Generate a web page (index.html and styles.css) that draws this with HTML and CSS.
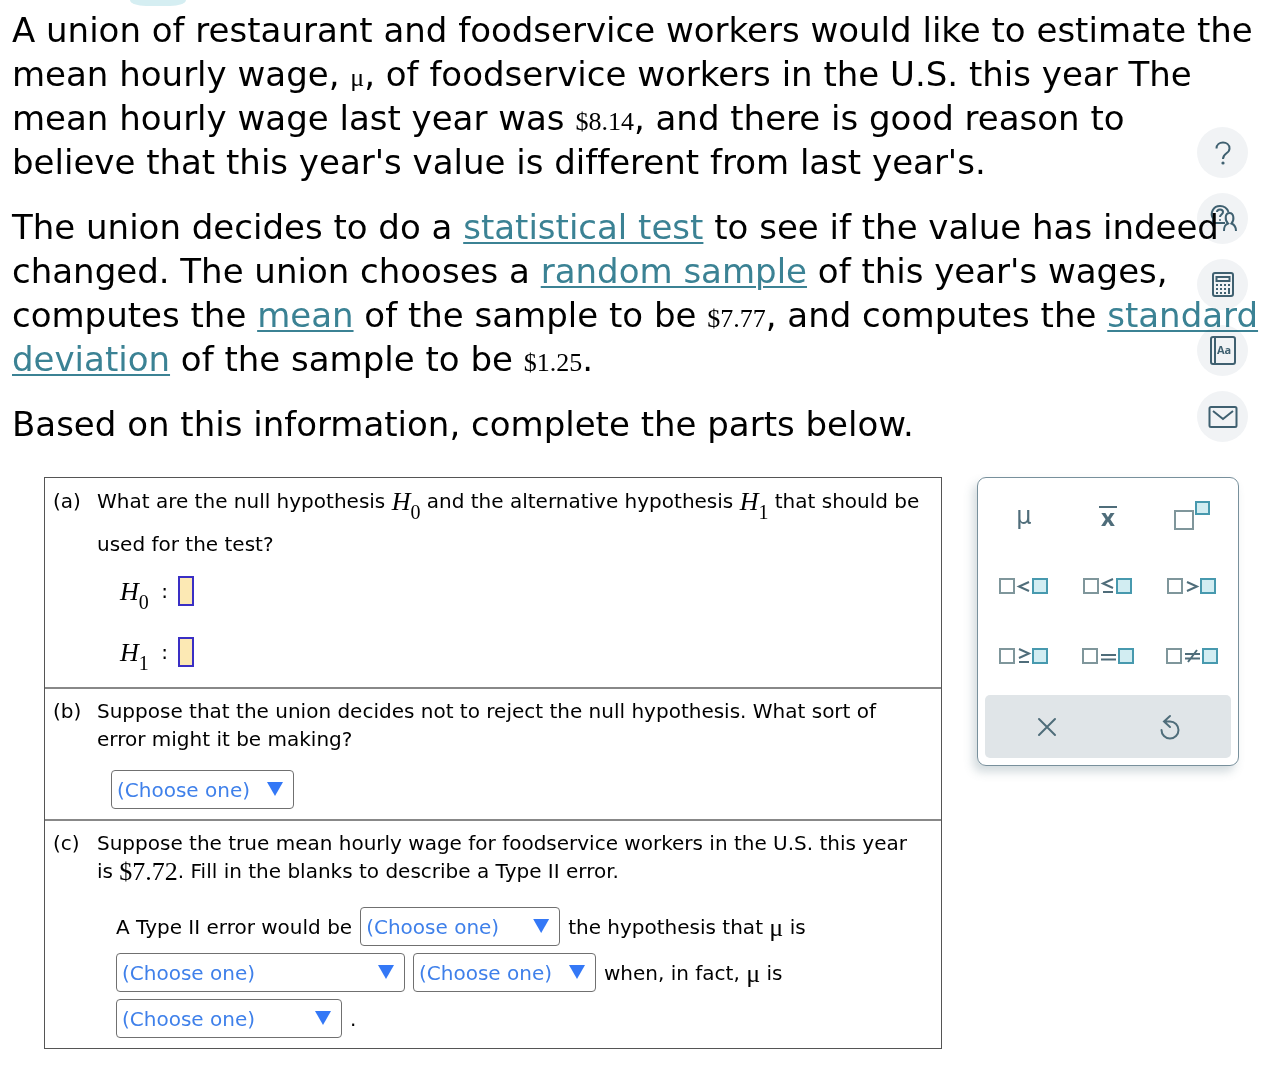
FILE: index.html
```html
<!DOCTYPE html>
<html lang="en">
<head>
    <meta charset="UTF-8">
    <meta name="viewport" content="width=device-width, initial-scale=1.0">
    <title>Hypothesis test</title>
    <link rel="stylesheet" href="styles.css">
</head>

<body>
    <div class="tab"></div>

    <main class="problem">
        <div class="intro">
            <p>A union of restaurant and foodservice workers would like to estimate the mean hourly wage, <span class="math">μ</span>, of foodservice workers in the U.S. this year The mean hourly wage last year was <span class="math">$8.14</span>, and there is good reason to believe&nbsp;that this year's value is different from last year's.</p>
            <p>The union decides to do a <a href="#">statistical test</a> to see if the value has indeed changed. The union chooses a <a href="#">random sample</a> of this year's wages, computes the <a href="#">mean</a> of the sample to be <span class="math">$7.77</span>, and computes the <a href="#">standard deviation</a> of the sample to be <span class="math">$1.25</span>.</p>
            <p>Based on this information, complete the parts below.</p>
        </div>

        <div class="work">
            <div class="parts">
                <section class="part part-a">
                    <span class="letter">(a)</span>
                    <div class="content">
                        <p>What are the null hypothesis <span class="math"><i>H</i><sub>0</sub></span> and the alternative hypothesis <span class="math"><i>H</i><sub>1</sub></span> that should be used for the test?</p>
                        <div class="answers">
                            <div class="answer">
                                <label for="h0"><span class="math"><i>H</i><sub>0</sub></span> :</label>
                                <input type="text" id="h0" class="box">
                            </div>
                            <div class="answer">
                                <label for="h1"><span class="math"><i>H</i><sub>1</sub></span> :</label>
                                <input type="text" id="h1" class="box">
                            </div>
                        </div>
                    </div>
                </section>

                <section class="part part-b">
                    <span class="letter">(b)</span>
                    <div class="content">
                        <p><label for="errorType">Suppose that the union decides not to reject the null hypothesis. What sort of error might it be making?</label></p>
                        <div class="choices">
                            <span class="choice small"><select id="errorType"><option>(Choose one)</option></select></span>
                        </div>
                    </div>
                </section>

                <section class="part part-c">
                    <span class="letter">(c)</span>
                    <div class="content">
                        <p>Suppose the true mean hourly wage for foodservice workers in the U.S. this year is <span class="math">$7.72</span>. Fill in the blanks to describe a Type II error.</p>
                        <div class="sentence">
                            <label for="decision">A Type II error would be</label>
                            <span class="choice medium"><select id="decision"><option>(Choose one)</option></select></span>
                            <label for="relation">the hypothesis that <span class="math">μ</span> is</label>
                            <span class="choice wide"><select id="relation"><option>(Choose one)</option></select></span>
                            <span class="choice small"><select id="value" aria-label="Hypothesis value"><option>(Choose one)</option></select></span>
                            <label for="actual">when, in fact, <span class="math">μ</span> is</label>
                            <span class="choice large"><select id="actual"><option>(Choose one)</option></select></span>
                            <span>.</span>
                        </div>
                    </div>
                </section>
            </div>

            <div class="palette">
                <div class="keys">
                    <button type="button" class="mu">μ</button>
                    <button type="button" class="xbar" aria-label="x bar"><span>x</span></button>
                    <button type="button" aria-label="exponent">
                        <svg width="36" height="30" viewBox="0 0 36 30">
                            <rect class="empty" x="1" y="10" width="18" height="18"/>
                            <rect class="filled" x="22" y="1" width="13" height="12"/>
                        </svg>
                    </button>
                    <button type="button" aria-label="less than">
                        <svg width="50" height="16" viewBox="0 0 50 16">
                            <rect class="empty" x="1" y="1" width="14" height="14"/>
                            <path class="sign" d="M30 4 L20 8.500 L30 13"/>
                            <rect class="filled" x="34" y="1" width="14" height="14"/>
                        </svg>
                    </button>
                    <button type="button" aria-label="less than or equal">
                        <svg width="50" height="16" viewBox="0 0 50 16">
                            <rect class="empty" x="1" y="1" width="14" height="14"/>
                            <path class="sign" d="M30 1 L20 5.500 L30 10 M20 14 H30"/>
                            <rect class="filled" x="34" y="1" width="14" height="14"/>
                        </svg>
                    </button>
                    <button type="button" aria-label="greater than">
                        <svg width="50" height="16" viewBox="0 0 50 16">
                            <rect class="empty" x="1" y="1" width="14" height="14"/>
                            <path class="sign" d="M20 4 L30 8.500 L20 13"/>
                            <rect class="filled" x="34" y="1" width="14" height="14"/>
                        </svg>
                    </button>
                    <button type="button" aria-label="greater than or equal">
                        <svg width="50" height="16" viewBox="0 0 50 16">
                            <rect class="empty" x="1" y="1" width="14" height="14"/>
                            <path class="sign" d="M20 1 L30 5.500 L20 10 M20 14 H30"/>
                            <rect class="filled" x="34" y="1" width="14" height="14"/>
                        </svg>
                    </button>
                    <button type="button" aria-label="equal">
                        <svg width="52" height="16" viewBox="0 0 52 16">
                            <rect class="empty" x="1" y="1" width="14" height="14"/>
                            <path class="sign" d="M19 7 H34 M19 11.500 H34"/>
                            <rect class="filled" x="37" y="1" width="14" height="14"/>
                        </svg>
                    </button>
                    <button type="button" aria-label="not equal">
                        <svg width="52" height="16" viewBox="0 0 52 16">
                            <rect class="empty" x="1" y="1" width="14" height="14"/>
                            <path class="sign" d="M19 6 H34 M19 10.500 H34 M31 2 L22 14"/>
                            <rect class="filled" x="37" y="1" width="14" height="14"/>
                        </svg>
                    </button>
                </div>
                <div class="actions">
                    <button type="button" aria-label="clear">
                        <svg width="20" height="20" viewBox="0 0 20 20"><path class="line" d="M2 2 L18 18 M18 2 L2 18"/></svg>
                    </button>
                    <button type="button" aria-label="undo">
                        <svg width="20" height="26" viewBox="0 0 20 26"><path class="line" d="M1.500 16 A8.500 8.500 0 1 0 10 7.500 H4 M10 2 L4 7.500 L10 13"/></svg>
                    </button>
                </div>
            </div>
        </div>
    </main>

    <nav class="tools">
        <button type="button" aria-label="help">
            <svg width="30" height="30" viewBox="0 0 30 30"><path d="M8.500 10.500 C8.500 2.500 21.500 2.500 21.500 10.500 C21.500 16 15 14.500 15 21"/><circle class="dot" cx="15" cy="25" r="1.600"/></svg>
        </button>
        <button type="button" aria-label="ask a tutor">
            <svg width="30" height="30" viewBox="0 0 30 30"><path d="M17 19 H4 L5.500 15.500 C1 8 6 2 12 2 C16 2 19 4 20.500 8"/><path d="M9 8 C9 4.500 15 4.500 15 8 C15 10.500 12 10.500 12 13"/><circle class="dot" cx="12" cy="16" r="1"/><path d="M16 27 C16 23 16.500 21 20 19.500 C16.500 16 17 9 21.500 9 C26 9 26.500 16 23.500 19.500 C27 21 28 23 28 27"/></svg>
        </button>
        <button type="button" aria-label="calculator">
            <svg width="30" height="30" viewBox="0 0 30 30"><rect x="5" y="3" width="20" height="23" rx="2"/><rect x="8.500" y="7" width="13" height="4"/><path stroke-dasharray="2 2" d="M8 15 H19 M8 19 H19 M8 23 H19"/><path d="M21 14 V16 M21 18 V24"/></svg>
        </button>
        <button type="button" aria-label="dictionary">
            <svg width="30" height="30" viewBox="0 0 30 30"><rect x="3" y="1" width="24" height="27" rx="2"/><path d="M7 1 V28"/><text x="9" y="18">Aa</text></svg>
        </button>
        <button type="button" aria-label="message">
            <svg width="30" height="30" viewBox="0 0 30 30"><rect x="1.500" y="5" width="27" height="20" rx="1.500"/><path d="M5 9 L15 17 L25 9"/></svg>
        </button>
    </nav>
</body>
</html>
```
FILE: styles.css
```css
* {
    box-sizing: border-box;
}

body {
    margin: 0;
    background-color: #ffffff;
    color: #000000;
    font-family: Verdana, "DejaVu Sans", sans-serif;
    font-size: 20px;
    font-variant-ligatures: none;
    line-height: 28px;
}

p {
    margin: 0;
}

button {
    padding: 0;
    border: none;
    background: none;
    color: #4f6d7a;
    cursor: pointer;
}

svg {
    display: block;
    fill: none;
}

.tab {
    width: 56px;
    height: 6px;
    margin-left: 130px;
    border-radius: 0 0 16px 16px / 0 0 6px 6px;
    background-color: #d5eef2;
}

/* intro text */
.intro {
    padding: 2px 12px 0;
    font-size: 34px;
    line-height: 44px;
}

.intro p {
    margin-bottom: 21px;
}

.intro a {
    color: #3b8294;
    text-decoration-thickness: 2px;
    text-underline-offset: 3px;
}

.math {
    font-family: "Liberation Serif", serif;
    font-size: 26px;
    line-height: 1;
}

.math sub {
    font-size: 20px;
    line-height: 1;
    vertical-align: -9px;
}

/* question table and math keys */
.work {
    display: flex;
    align-items: flex-start;
    gap: 35px;
    padding: 10px 45px 27px 44px;
}

.parts {
    flex: 1;
    border: 1px solid #555555;
}

.parts .math {
    vertical-align: -2px;
}

.part {
    display: flex;
    padding: 8px 18px 10px 8px;
}

.part + .part {
    border-top: 2px solid #888888;
}

.letter {
    width: 44px;
    flex-shrink: 0;
}

.content {
    flex: 1;
}

.part-a {
    padding-top: 2px;
    line-height: 43px;
}

.answers {
    display: flex;
    flex-direction: column;
    gap: 11px;
    padding-left: 23px;
}

.answer {
    display: flex;
    align-items: center;
    height: 50px;
    gap: 10px;
}

.answer .math {
    margin-right: 6px;
}

.box {
    width: 16px;
    height: 30px;
    padding: 0;
    border: 2px solid #3a2fc4;
    background-color: #fce9b4;
}

.choices {
    padding: 17px 0 0 14px;
}

.sentence {
    display: flex;
    flex-wrap: wrap;
    align-items: center;
    gap: 7px 8px;
    padding: 22px 0 0 19px;
}

.choice {
    display: block;
    position: relative;
}

.choice::after {
    content: "";
    position: absolute;
    right: 11px;
    top: 12px;
    width: 16px;
    height: 14px;
    background-color: #3478f6;
    clip-path: polygon(0 0, 100% 0, 50% 100%);
    pointer-events: none;
}

select {
    display: block;
    width: 100%;
    height: 39px;
    padding: 0 5px;
    border: 1px solid #707070;
    border-radius: 4px;
    background-color: #ffffff;
    color: #3f80ea;
    font-family: inherit;
    font-size: 20px;
    appearance: none;
}

.small {
    width: 183px;
}

.medium {
    width: 200px;
}

.large {
    width: 226px;
}

.wide {
    width: 289px;
}

.palette {
    width: 262px;
    padding: 3px 7px 7px;
    border: 1px solid #78909c;
    border-radius: 9px;
    box-shadow: -4px 6px 10px rgba(80, 110, 125, 0.25);
}

.keys {
    display: grid;
    grid-template-columns: repeat(3, 84px);
    grid-auto-rows: 70px;
    justify-content: center;
    margin-bottom: 4px;
}

.keys button {
    display: flex;
    align-items: center;
    justify-content: center;
}

.keys .mu {
    font-family: "DejaVu Sans", sans-serif;
    font-size: 24px;
}

.keys .xbar {
    font-family: "Open Sans", sans-serif;
    font-size: 24px;
    font-weight: bold;
}

.xbar span {
    padding: 0 2px;
    border-top: 2px solid #4f6d7a;
    line-height: 18px;
}

.empty {
    stroke: #7f969b;
    stroke-width: 2;
}

.filled {
    fill: #d2edf2;
    stroke: #4799ae;
    stroke-width: 2;
}

.sign {
    stroke: #4f6d7a;
    stroke-width: 2;
}

.actions {
    display: flex;
    height: 63px;
    border-radius: 5px;
    background-color: #e0e5e8;
}

.actions button {
    display: flex;
    flex: 1;
    align-items: center;
    justify-content: center;
}

.line {
    stroke: #4f6d7a;
    stroke-width: 2;
    stroke-linecap: round;
}

/* round help buttons floating at the right */
.tools {
    position: absolute;
    top: 127px;
    right: 36px;
    display: flex;
    flex-direction: column;
    gap: 15px;
    mix-blend-mode: multiply;
}

.tools button {
    display: flex;
    align-items: center;
    justify-content: center;
    width: 51px;
    height: 51px;
    border-radius: 50%;
    background-color: #f1f3f5;
}

.tools svg {
    stroke: #3f6070;
    stroke-width: 2;
}

.tools .dot {
    fill: #3f6070;
    stroke: none;
}

.tools text {
    fill: #3f6070;
    stroke: none;
    font-family: "Open Sans", sans-serif;
    font-size: 11px;
    font-weight: bold;
}
```
